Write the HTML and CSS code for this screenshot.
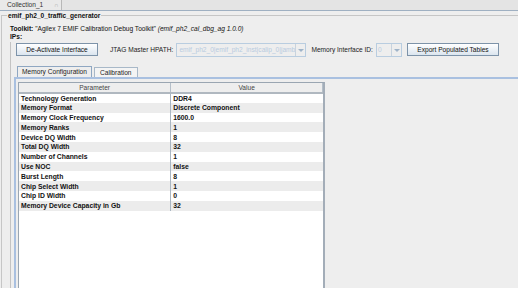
FILE: index.html
```html
<!DOCTYPE html>
<html lang="en">
<head>
<meta charset="UTF-8">
<title>emif_ph2_0_traffic_generator</title>
<link rel="stylesheet" href="styles.css">
</head>
<body>
<div class="doc-tabs">
	<div class="doc-tab">Collection_1 <span class="doc-close">&#8745;</span></div>
</div>
<div class="page">
	<fieldset class="group">
		<legend>emif_ph2_0_traffic_generator</legend>
		<div class="info"><b>Toolkit:</b> "Agilex 7 EMIF Calibration Debug Toolkit" <i>(emif_ph2_cal_dbg_ag 1.0.0)</i></div>
		<div class="info"><b>IPs:</b></div>
		<div class="ips">
			<div class="toolbar">
				<button class="btn btn-deact">De-Activate Interface</button>
				<span class="lbl">JTAG Master HPATH:</span>
				<div class="combo combo-path"><span class="combo-text">emif_ph2_0|emif_ph2_inst|calip_0|jamb</span><span class="combo-arrow"></span></div>
				<span class="lbl">Memory Interface ID:</span>
				<div class="combo combo-id"><span class="combo-text">0</span><span class="combo-arrow"></span></div>
				<button class="btn btn-export">Export Populated Tables</button>
			</div>
			<div class="tabs">
				<div class="tab tab-on">Memory Configuration</div>
				<div class="tab">Calibration</div>
			</div>
			<div class="tab-body">
				<div class="scroll">
					<table class="grid">
						<thead>
							<tr><th>Parameter</th><th>Value</th></tr>
						</thead>
						<tbody>
							<tr><td>Technology Generation</td><td>DDR4</td></tr>
							<tr><td>Memory Format</td><td>Discrete Component</td></tr>
							<tr><td>Memory Clock Frequency</td><td>1600.0</td></tr>
							<tr><td>Memory Ranks</td><td>1</td></tr>
							<tr><td>Device DQ Width</td><td>8</td></tr>
							<tr><td>Total DQ Width</td><td>32</td></tr>
							<tr><td>Number of Channels</td><td>1</td></tr>
							<tr><td>Use NOC</td><td>false</td></tr>
							<tr><td>Burst Length</td><td>8</td></tr>
							<tr><td>Chip Select Width</td><td>1</td></tr>
							<tr><td>Chip ID Width</td><td>0</td></tr>
							<tr><td>Memory Device Capacity in Gb</td><td>32</td></tr>
						</tbody>
					</table>
				</div>
			</div>
		</div>
	</fieldset>
</div>
</body>
</html>
```

FILE: styles.css
```css
*{margin:0;padding:0;box-sizing:border-box}
html,body{height:100%;overflow:hidden}
body{
	background:#eeeeee;
	font-family:"Liberation Sans",Arial,sans-serif;
	font-size:6.6px;
	color:#111;
}
.doc-tabs{
	height:11px;
	background:#e4e4e4;
	border-bottom:1px solid #9fb0c2;
	display:flex;
}
.doc-tab{
	width:62px;
	height:10px;
	padding:1px 0 0 7px;
	background:#e9e9e9;
	border-right:1px solid #b8b8b8;
	color:#333;
}
.doc-close{
	margin-left:9px;
	color:#aaa;
	font-size:6px;
}
.page{
	padding:0 0 0 1px;
	height:calc(100% - 11px);
}
.group{
	border:1px solid #c6c6c6;
	border-right:none;
	border-bottom:none;
	height:100%;
	margin-top:1px;
	padding:0 0 0 8px;
}
.group legend{
	font-weight:bold;
	padding:0 1px;
	margin-left:-3px;
}
.info{
	height:8px;
	line-height:8px;
}
.info:first-of-type{margin-top:6px}
.ips{
	margin-top:1px;
	border-left:1px solid #c3c3c3;
	height:100%;
	padding:0 0 0 3px;
}
.toolbar{
	display:flex;
	align-items:center;
	height:15px;
}
.btn{
	font-family:"Liberation Sans",Arial,sans-serif;
	font-size:6.6px;
	color:#111;
	height:13px;
	border:1px solid #7d93a9;
	background:linear-gradient(#ffffff,#dbe5ef);
	padding:0;
}
.btn-deact{width:82px;margin-left:2px}
.btn-export{width:92px;margin-left:5px}
.lbl{margin-left:5px;color:#222}
.btn-deact + .lbl{margin-left:12px}
.combo{
	display:flex;
	height:14px;
	margin-left:3px;
	border:1px solid #b9cde0;
	background:#eeeeee;
}
.combo-text{
	flex:1;
	color:#b8cbe0;
	padding:2px 0 0 2px;
	overflow:hidden;
	white-space:nowrap;
}
.combo-arrow{
	width:10px;
	border-left:1px solid #c8d3de;
	position:relative;
}
.combo-arrow::after{
	content:"";
	position:absolute;
	left:2px;
	top:5px;
	border-left:3px solid transparent;
	border-right:3px solid transparent;
	border-top:3px solid #9fb4c9;
}
.combo-path{width:130px}
.combo-id{width:26px}
.combo-id .combo-text{padding-left:1px}
.tabs{
	display:flex;
	margin:9px 0 0 3px;
	height:11px;
	align-items:flex-end;
}
.tab{
	height:10px;
	padding:1px 5px 0;
	border:1px solid #a8b8c8;
	border-bottom:none;
	background:#f4f4f4;
	margin-right:2px;
	color:#222;
	white-space:nowrap;
}
.tab-on{
	height:11px;
	width:75px;
	padding:1px 0 0;
	text-align:center;
	background:#eeeeee;
	border-color:#8fa7c2;
}
.tab-body{
	border-top:2px solid #a9c0e0;
	border-left:2px solid #a9c0e0;
	height:100%;
	padding:3px 0 0 2px;
}
.scroll{
	width:307px;
	height:100%;
	background:#fff;
	border:1px solid #9aa6b2;
	border-right:2px solid #a3adb8;
	border-bottom:none;
}
.grid{
	width:100%;
	border-collapse:collapse;
	table-layout:fixed;
}
.grid th{
	height:10px;
	font-weight:normal;
	color:#444;
	background:#eeeeee;
	border:1px solid #b5bfc9;
	border-top:none;
	border-bottom:2px solid #b0b8c0;
}
.grid th:first-child{border-left:none}
.grid td{
	height:9.8px;
	font-weight:bold;
	font-size:6.8px;
	padding:0 0 0 2px;
	white-space:nowrap;
}
.grid td + td{border-left:1px solid #aab6c2}
.grid tbody tr:nth-child(even) td{background:#ececec}
```
